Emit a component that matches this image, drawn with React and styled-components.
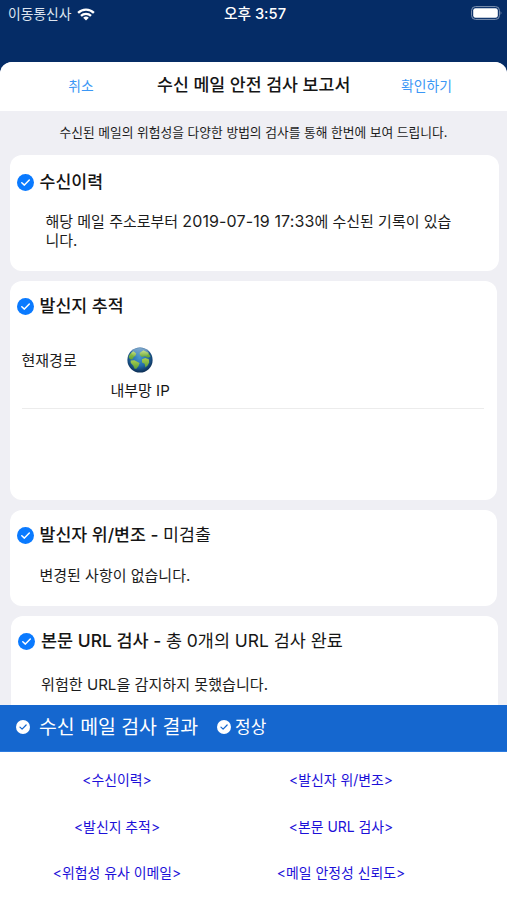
import styled, { createGlobalStyle } from "styled-components";

const links = [
  "<수신이력>",
  "<발신자 위/변조>",
  "<발신지 추적>",
  "<본문 URL 검사>",
  "<위험성 유사 이메일>",
  "<메일 안정성 신뢰도>",
];

function CheckIcon({ size = 17, color = "#0a7aff", mark = "#fff" }) {
  return (
    <svg width={size} height={size} viewBox="0 0 17 17" aria-hidden="true">
      <circle cx="8.5" cy="8.5" r="8.5" fill={color} />
      <path
        d="M4.8 8.7 L7.4 11.1 L12.3 6.1"
        fill="none"
        stroke={mark}
        strokeWidth="1.5"
        strokeLinecap="round"
        strokeLinejoin="round"
      />
    </svg>
  );
}

function WifiIcon() {
  return (
    <svg width="18" height="13" viewBox="0 0 18 13" aria-hidden="true">
      <g fill="none" stroke="#fff" strokeWidth="2.3">
        <path d="M1.1 4.9 A11.2 11.2 0 0 1 16.9 4.9" />
        <path d="M4 7.9 A7.1 7.1 0 0 1 14 7.9" />
      </g>
      <path d="M9 12.6 L6.2 9.8 A4 4 0 0 1 11.8 9.8 Z" fill="#fff" />
    </svg>
  );
}

function BatteryIcon() {
  return (
    <svg width="32" height="14" viewBox="0 0 32 14" aria-hidden="true">
      <rect
        x="0.6"
        y="0.6"
        width="27.8"
        height="12.8"
        rx="3.8"
        fill="none"
        stroke="#8296b3"
      />
      <rect x="2.2" y="2.2" width="24.6" height="9.6" rx="2.3" fill="#fff" />
      <path d="M29.6 5 Q31.4 7 29.6 9 Z" fill="#8296b3" />
    </svg>
  );
}

function GlobeIcon() {
  return (
    <svg width="26" height="26" viewBox="0 0 26 26" aria-hidden="true">
      <defs>
        <radialGradient id="sea" cx="0.48" cy="0.4" r="0.6">
          <stop offset="0" stopColor="#4796cd" />
          <stop offset="0.55" stopColor="#236cac" />
          <stop offset="1" stopColor="#0b2c52" />
        </radialGradient>
        <linearGradient id="land" x1="0" y1="0" x2="0" y2="1">
          <stop offset="0" stopColor="#a9cf4f" />
          <stop offset="1" stopColor="#5c9f36" />
        </linearGradient>
        <linearGradient id="shine" x1="0" y1="0" x2="0" y2="1">
          <stop offset="0" stopColor="#fff" stopOpacity="0.45" />
          <stop offset="1" stopColor="#fff" stopOpacity="0" />
        </linearGradient>
      </defs>
      <circle cx="13" cy="13" r="12.6" fill="url(#sea)" />
      <g fill="url(#land)">
        <path d="M1.6 10 Q3 5.6 6.6 4.2 L9.2 6.6 L8.6 8.6 L6.4 10.6 L5.4 12.6 L3 12.2 Z" />
        <path d="M3.6 13.6 L7.4 13.2 L12.6 16 L11.6 19 L9.4 21.8 L7.6 21.8 L6.2 18.4 L3.8 16 Z" />
        <path d="M15 12.2 L18.2 11 L21.8 12.2 L22.2 15.4 L20.6 18.6 L18.4 20.6 L17.6 16.8 L15 15.4 Z" />
        <path d="M12.6 6 L16.4 3.2 L21 5.4 L23.6 9.4 L21.2 10.8 L17.8 9.2 L15 10 L13 8.6 Z" />
      </g>
      <ellipse cx="13" cy="5.6" rx="8.8" ry="4.7" fill="url(#shine)" />
    </svg>
  );
}

export default function App() {
  return (
    <>
      <GlobalStyle />
      <Screen>
        <StatusBar>
          <Carrier>
            <Text $size={13.8} $color="#dde5f0">
              이동통신사
            </Text>
            <WifiIcon />
          </Carrier>
          <Text $size={14.7} $weight={500} $color="#fff">
            오후 3:57
          </Text>
          <BatterySlot>
            <BatteryIcon />
          </BatterySlot>
        </StatusBar>

        <Sheet>
          <SheetHeader>
            <HeaderButton $shift={5}>취소</HeaderButton>
            <Text as="h1" $size={17.3} $weight={500}>
              수신 메일 안전 검사 보고서
            </Text>
            <HeaderButton>확인하기</HeaderButton>
          </SheetHeader>

          <Report>
            <Caption>
              수신된 메일의 위험성을 다양한 방법의 검사를 통해 한번에 보여
              드립니다.
            </Caption>

            <Card $height={116} $right={8.5}>
              <CardTitle $top={16}>
                <CheckIcon />
                <Text as="h2" $size={17.3} $weight={500}>
                  수신이력
                </Text>
              </CardTitle>
              <CardBody $top={19} $left={36}>
                해당 메일 주소로부터 <Stamp>2019-07-19 17:33</Stamp>에 수신된
                기록이 있습
                <br />
                니다.
              </CardBody>
            </Card>

            <Card $height={219}>
              <CardTitle $top={14}>
                <CheckIcon />
                <Text as="h2" $size={17.3} $weight={500}>
                  발신지 추적
                </Text>
              </CardTitle>
              <RouteRow>
                <RouteLabel>현재경로</RouteLabel>
                <RouteStop>
                  <GlobeIcon />
                  <Text $size={15}>내부망 IP</Text>
                </RouteStop>
              </RouteRow>
            </Card>

            <Card $height={96}>
              <CardTitle $top={14}>
                <CheckIcon />
                <Text as="h2" $size={17.3} $weight={500}>
                  발신자 위/변조 - <Light>미검출</Light>
                </Text>
              </CardTitle>
              <CardBody $top={20} $left={30}>
                변경된 사항이 없습니다.
              </CardBody>
            </Card>

            <Card $height={110} $left={11} $right={9}>
              <CardTitle $top={14}>
                <CheckIcon />
                <Text as="h2" $size={17.45} $weight={500}>
                  본문 URL 검사 - <Light>총 0개의 URL 검사 완료</Light>
                </Text>
              </CardTitle>
              <CardBody $top={23} $left={30} $size={15.1}>
                위험한 URL을 감지하지 못했습니다.
              </CardBody>
            </Card>
          </Report>
        </Sheet>

        <ResultBar>
          <CheckIcon size={14} color="#fff" mark="#1567cf" />
          <ResultTitle>수신 메일 검사 결과</ResultTitle>
          <CheckIcon size={14} color="#fff" mark="#1567cf" />
          <ResultState>정상</ResultState>
        </ResultBar>

        <LinkGrid>
          {links.map((label) => (
            <ReportLink key={label}>{label}</ReportLink>
          ))}
        </LinkGrid>
      </Screen>
    </>
  );
}

const GlobalStyle = createGlobalStyle`
  * {
    box-sizing: border-box;
  }

  body {
    margin: 0;
    font-family: Inter, "Noto Sans CJK KR", sans-serif;
    color: #1c1c1c;
  }

  svg {
    display: block;
    flex-shrink: 0;
  }
`;

const Screen = styled.main`
  width: 507px;
  height: 900px;
  display: flex;
  flex-direction: column;
  overflow: hidden;
  background: #052c66;
`;

const Text = styled.span`
  margin: 0;
  font-size: ${({ $size }) => $size}px;
  font-weight: ${({ $weight }) => $weight || 400};
  color: ${({ $color }) => $color || "#151515"};
  line-height: 20px;
  white-space: nowrap;
`;

const Light = styled.span`
  font-weight: 400;
`;

const Stamp = styled.time`
  font-size: 16px;
  line-height: 1;
  letter-spacing: 0.12px;
`;

const StatusBar = styled.header`
  height: 62px;
  flex-shrink: 0;
  display: grid;
  grid-template-columns: 1fr auto 1fr;
  align-items: start;
  padding: 4px 5px 0 8px;
`;

const Carrier = styled.div`
  display: flex;
  align-items: center;
  gap: 6px;
`;

const BatterySlot = styled.div`
  display: flex;
  justify-content: flex-end;
  padding-top: 2px;
  margin-right: -1px;
`;

const Sheet = styled.section`
  height: 643px;
  flex-shrink: 0;
  overflow: hidden;
  border-radius: 12px 12px 0 0;
  background: #efeff4;
`;

const SheetHeader = styled.div`
  height: 49px;
  display: grid;
  grid-template-columns: 157px 194px 151px;
  align-items: center;
  padding-bottom: 3px;
  background: #fff;
`;

const HeaderButton = styled.button`
  border: 0;
  padding: 2px 0 0 ${({ $shift }) => $shift || 0}px;
  background: none;
  font-family: inherit;
  font-size: 13.8px;
  line-height: 20px;
  color: #3b97f5;
  text-align: center;
`;

const Report = styled.div`
  display: flex;
  flex-direction: column;
  gap: 10px;
`;

const Caption = styled.p`
  margin: 0;
  height: 34px;
  padding-top: 12px;
  font-size: 12.75px;
  line-height: 20px;
  text-align: center;
  white-space: nowrap;
`;

const Card = styled.article`
  height: ${({ $height }) => $height}px;
  flex-shrink: 0;
  margin: 0 ${({ $right }) => $right || 10}px 0
    ${({ $left }) => $left || 9.5}px;
  border-radius: 12px;
  background: #fff;
`;

const CardTitle = styled.div`
  height: ${({ $top }) => $top + 22}px;
  display: flex;
  align-items: center;
  gap: 6px;
  padding: ${({ $top }) => $top}px 0 0 7px;
`;

const CardBody = styled.p`
  margin: ${({ $top }) => $top}px 0 0 ${({ $left }) => $left}px;
  font-size: ${({ $size }) => $size || 15}px;
  line-height: 19px;
  white-space: nowrap;
`;

const RouteRow = styled.div`
  height: 92px;
  display: flex;
  margin: 0 13px 0 12px;
  padding-top: 30px;
  border-bottom: 1px solid #ececec;
`;

const RouteLabel = styled.span`
  width: 89px;
  padding-top: 4px;
  font-size: 15px;
  line-height: 20px;
`;

const RouteStop = styled.div`
  display: flex;
  flex-direction: column;
  align-items: center;
  gap: 8px;
`;

const ResultBar = styled.div`
  height: 47px;
  flex-shrink: 0;
  display: flex;
  align-items: center;
  padding: 0 0 3px 16px;
  background: #1567cf;
  border-bottom: 1px solid #2b7be0;
  color: #fff;
`;

const ResultTitle = styled.strong`
  width: 178px;
  margin-left: 9px;
  font-size: 19.4px;
  font-weight: 400;
  line-height: 26px;
  white-space: nowrap;
`;

const ResultState = styled.span`
  margin-left: 4px;
  font-size: 17px;
  line-height: 26px;
`;

const LinkGrid = styled.nav`
  flex: 1;
  display: grid;
  grid-template-columns: 234px 214px;
  grid-auto-rows: 46.5px;
  align-items: center;
  padding-top: 5px;
  background: #fff;
`;

const ReportLink = styled.a`
  font-size: 13.9px;
  line-height: 20px;
  text-align: center;
  white-space: nowrap;
  color: #1c10d8;
`;
